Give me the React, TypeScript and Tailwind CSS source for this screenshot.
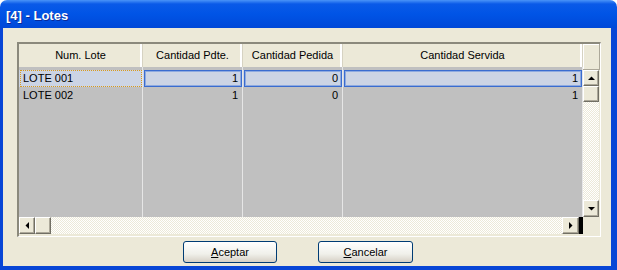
import React from "react";

function ScrollBtn({ dir, className = "" }: { dir: "up" | "down" | "left" | "right"; className?: string }) {
  const tri: Record<string, string> = {
    up: "1,5 8,5 4.5,1.5",
    down: "1,2 8,2 4.5,5.5",
    left: "5,1 5,8 1.5,4.5",
    right: "2,1 2,8 5.5,4.5",
  };
  const vert = dir === "up" || dir === "down";
  return (
    <div
      className={`flex items-center justify-center bg-[#ece9d8] border-t border-l border-t-white border-l-white border-r border-b border-r-[#716f64] border-b-[#716f64] shadow-[inset_-1px_-1px_0_#aca899] ${className}`}
    >
      <svg width={vert ? 9 : 7} height={vert ? 7 : 9} viewBox={vert ? "0 0 9 7" : "0 0 7 9"}>
        <polygon points={tri[dir]} fill="#000" />
      </svg>
    </div>
  );
}

const cols = [
  { name: "Num. Lote", w: "w-[124px]" },
  { name: "Cantidad Pdte.", w: "w-[100px]" },
  { name: "Cantidad Pedida", w: "w-[100px]" },
  { name: "Cantidad Servida", w: "w-[240px]" },
];

const rows = [
  ["LOTE 001", "1", "0", "1"],
  ["LOTE 002", "1", "0", "1"],
];

const track =
  "bg-[image:repeating-conic-gradient(#ffffff_0%_25%,#ece9d8_0%_50%)] bg-[length:2px_2px]";

export default function App() {
  return (
    <div className="w-[617px] h-[270px] flex flex-col bg-white font-['Liberation_Sans',Arial,sans-serif] text-[11px] text-black">
      <div className="h-[28px] shrink-0 rounded-t-[7px] bg-[linear-gradient(#4a94f8_0px,#0a5ae8_4px,#0054e6_50%,#0048d8_100%)] flex items-center pl-[6px] pt-[3px]">
        <span className="text-white font-bold text-[13px] [text-shadow:1px_1px_0_#0a2a9a]">[4] - Lotes</span>
      </div>
      <div className="flex-1 flex flex-col border-l-[3px] border-r-[6px] border-b-[4px] border-[#0846d6] bg-[#ece9d8] pl-[14px] pt-[14px] pr-[10px]">
        <div className="h-[195px] flex flex-col border-t-2 border-l-2 border-t-[#8b897c] border-l-[#8b897c] border-r border-b border-r-white border-b-white">
          <div className="h-[173px] flex">
            <div className="w-[564px] flex flex-col bg-[#c0c0c0]">
              <div className="h-[23px] flex bg-[#ece9d8]">
                {cols.map((c) => (
                  <div
                    key={c.name}
                    className={`${c.w} flex items-center justify-center border-r border-r-[#d6d2c2] shadow-[inset_-2px_0_0_#ffffff]`}
                  >
                    {c.name}
                  </div>
                ))}
              </div>
              <div className="h-[3px] flex">
                {cols.map((c) => (
                  <div key={c.name} className={`${c.w} border-r border-r-[#e6e6e6]`} />
                ))}
              </div>
              {rows.map((r, ri) => (
                <div key={ri} className={`h-[17px] flex ${ri === 0 ? "bg-[#ccd4e4]" : ""}`}>
                  {r.map((v, ci) => {
                    const sel = ri === 0;
                    const base = `${cols[ci].w} flex items-center leading-none`;
                    if (ci === 0) {
                      return (
                        <div key={ci} className={`${base} border-r border-r-[#e6e6e6]`}>
                          <div
                            className={`h-full flex-1 flex items-center pl-[2px] ml-[1px] ${
                              sel ? "border border-dotted border-[#d99a1c]" : "border border-transparent"
                            }`}
                          >
                            {v}
                          </div>
                        </div>
                      );
                    }
                    return (
                      <div key={ci} className={`${base} border-r border-r-[#e6e6e6]`}>
                        <div
                          className={`h-full flex-1 flex items-center justify-end pr-[3px] ml-[1px] ${
                            sel
                              ? "border border-[#3a6ccf] shadow-[inset_0_0_0_1px_#8eaae0]"
                              : "border border-transparent"
                          }`}
                        >
                          {v}
                        </div>
                      </div>
                    );
                  })}
                </div>
              ))}
              <div className="flex-1 flex">
                {cols.map((c) => (
                  <div key={c.name} className={`${c.w} border-r border-r-[#e6e6e6]`} />
                ))}
              </div>
            </div>
            <div className="w-[17px] flex flex-col bg-[#ece9d8]">
              <div className="h-[26px] border-r border-b border-r-[#aca899] border-b-[#aca899] shadow-[inset_1px_1px_0_#ffffff]" />
              <ScrollBtn dir="up" className="h-[16px] w-[16px]" />
              <ScrollBtn dir="up" className="h-[16px] w-[16px] [&>svg]:hidden" />
              <div className={`flex-1 w-[16px] ${track}`} />
              <ScrollBtn dir="down" className="h-[17px] w-[16px]" />
            </div>
          </div>
          <div className="h-[17px] flex">
            <ScrollBtn dir="left" className="w-[16px] h-[17px]" />
            <ScrollBtn dir="left" className="w-[16px] h-[17px] [&>svg]:hidden" />
            <div className={`flex-1 ${track}`} />
            <ScrollBtn dir="right" className="w-[17px] h-[17px]" />
            <div className="w-[4px] bg-black" />
            <div className="w-[17px] bg-[#ece9d8]" />
          </div>
        </div>
        <div className="flex gap-[41px] pl-[166px] pt-[4px]">
          <button className="w-[94px] h-[22px] rounded-[3px] border border-[#003c74] bg-[linear-gradient(#ffffff,#f0f0ea_60%,#d6d0c5)] flex items-center justify-center">
            <span>
              <span className="underline">A</span>ceptar
            </span>
          </button>
          <button className="w-[95px] h-[22px] rounded-[3px] border border-[#003c74] bg-[linear-gradient(#ffffff,#f0f0ea_60%,#d6d0c5)] flex items-center justify-center">
            <span>
              <span className="underline">C</span>ancelar
            </span>
          </button>
        </div>
      </div>
    </div>
  );
}
